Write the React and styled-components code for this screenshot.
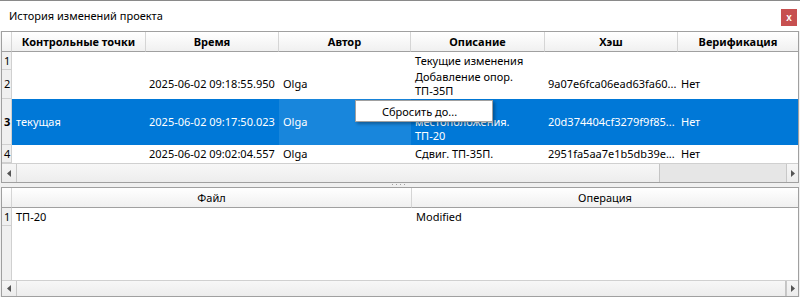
import React from 'react';
import styled, { createGlobalStyle } from 'styled-components';

const GlobalStyle = createGlobalStyle`
  html, body { margin: 0; padding: 0; background: #f0f0f0; }
  body { font-family: "Noto Sans", "Liberation Sans", sans-serif; font-size: 11px; color: #000; }
`;

// Окно целиком
const Window = styled.div`
  position: relative;
  width: 800px;
  height: 297px;
  box-sizing: border-box;
  border-top: 1px solid #8a8a8a;
  background: #f0f0f0;
  display: flex;
  flex-direction: column;
  overflow: hidden;
`;

const TitleBar = styled.div`
  height: 30px;
  background: #fff;
  display: flex;
  align-items: center;
  justify-content: space-between;
  padding: 0 3px 0 9px;
  box-sizing: border-box;
`;

const Title = styled.span`
  font-size: 11px;
  line-height: 14px;
`;

const CloseButton = styled.div`
  width: 16px;
  height: 17px;
  background: #c75050;
  color: #fff;
  font-family: "Liberation Sans", sans-serif;
  font-weight: bold;
  font-size: 10px;
  display: flex;
  align-items: center;
  justify-content: center;
  margin-top: 2px;
`;

const Frame = styled.div`
  margin: 0 1px;
  border: 1px solid #a0a0a0;
  background: #fff;
  display: flex;
  flex-direction: column;
  height: ${(p) => p.$height}px;
  box-sizing: border-box;
`;

const Row = styled.div`
  display: grid;
  grid-template-columns: ${(p) => p.$cols};
  height: ${(p) => p.$height}px;
  box-sizing: border-box;
`;

const HeaderCell = styled.div`
  background: linear-gradient(#ffffff, #f0f0f0);
  border-right: 1px solid #d5d5d5;
  border-bottom: 1px solid #a0a0a0;
  display: flex;
  align-items: center;
  justify-content: center;
  font-weight: ${(p) => (p.$bold ? 'bold' : 'normal')};
  white-space: nowrap;
  overflow: hidden;
  &:last-child { border-right: none; }
`;

const RowHeader = styled.div`
  background: #f0f0f0;
  border-right: 1px solid #d0d0d0;
  border-bottom: 1px solid #d0d0d0;
  padding-left: 2px;
  display: flex;
  align-items: center;
  font-weight: ${(p) => (p.$bold ? 'bold' : 'normal')};
`;

const Cell = styled.div`
  display: flex;
  flex-direction: column;
  justify-content: center;
  padding: 0 2px 0 ${(p) => p.$pad ?? 4}px;
  line-height: 14px;
  white-space: nowrap;
  overflow: hidden;
  background: ${(p) => (p.$hover ? '#1886dc' : p.$selected ? '#0078d7' : 'transparent')};
  color: ${(p) => (p.$selected ? '#fff' : '#000')};
`;

const Filler = styled.div`
  flex: 1;
  display: grid;
  grid-template-columns: ${(p) => p.$cols};
`;

const FillerHeader = styled.div`
  background: #f0f0f0;
  border-right: 1px solid #d0d0d0;
`;

const ScrollBar = styled.div`
  height: ${(p) => p.$height}px;
  display: flex;
  border-top: 1px solid #d0d0d0;
  background: #e6e6e6;
`;

const ArrowButton = styled.div`
  width: ${(p) => p.$width}px;
  background: linear-gradient(#f6f6f6, #ececec);
  border-right: ${(p) => (p.$side === 'left' ? '1px solid #c8c8c8' : 'none')};
  border-left: ${(p) => (p.$side === 'right' ? '1px solid #c8c8c8' : 'none')};
  display: flex;
  align-items: center;
  justify-content: center;
`;

const Thumb = styled.div`
  width: ${(p) => p.$width}px;
  background: linear-gradient(#f7f7f7, #ededed);
  border-right: 1px solid #c4c4c4;
`;

const Track = styled.div`
  flex: 1;
`;

const Splitter = styled.div`
  height: 4px;
  display: flex;
  justify-content: center;
  align-items: center;
`;

const MenuPopup = styled.div`
  position: absolute;
  left: 355px;
  top: 99px;
  width: 138px;
  height: 22px;
  box-sizing: border-box;
  background: #fff;
  border: 1px solid #a0a0a0;
  box-shadow: 2px 2px 3px rgba(0, 0, 0, 0.3);
  padding-left: 26px;
  display: flex;
  align-items: center;
`;

const TOP_COLS = '10px 134px 133px 132px 134px 133px 1fr';
const BOTTOM_COLS = '10px 400px 1fr';

const Arrow = ({ dir }) => (
  <svg width="4" height="7" viewBox="0 0 4 7">
    {dir === 'left' ? <polygon points="4,0 4,7 0,3.5" fill="#555" /> : <polygon points="0,0 0,7 4,3.5" fill="#555" />}
  </svg>
);

const Scroll = ({ thumb, height }) => (
  <ScrollBar $height={height}>
    <ArrowButton $width={14} $side="left"><Arrow dir="left" /></ArrowButton>
    <Thumb $width={thumb} />
    <Track />
    <ArrowButton $width={11} $side="right"><Arrow dir="right" /></ArrowButton>
  </ScrollBar>
);

const history = [
  { h: 18, point: '', time: '', author: '', desc: ['Текущие изменения'], hash: '', ver: '' },
  { h: 30, point: '', time: '2025-06-02 09:18:55.950', author: 'Olga', desc: ['Добавление опор.', 'ТП-35П'], hash: '9a07e6fca06ead63fa60...', ver: 'Нет' },
  { h: 46, point: 'текущая', time: '2025-06-02 09:17:50.023', author: 'Olga', desc: ['Изменение', 'местоположения.', 'ТП-20'], hash: '20d374404cf3279f9f85...', ver: 'Нет', selected: true },
  { h: 19, point: '', time: '2025-06-02 09:02:04.557', author: 'Olga', desc: ['Сдвиг. ТП-35П.'], hash: '2951fa5aa7e1b5db39e...', ver: 'Нет' },
];

const App = () => (
  <>
    <GlobalStyle />
    <Window>
      <TitleBar>
        <Title>История изменений проекта</Title>
        <CloseButton>x</CloseButton>
      </TitleBar>

      <Frame $height={152}>
        <Row $cols={TOP_COLS} $height={20}>
          <HeaderCell />
          <HeaderCell $bold>Контрольные точки</HeaderCell>
          <HeaderCell $bold>Время</HeaderCell>
          <HeaderCell $bold>Автор</HeaderCell>
          <HeaderCell $bold>Описание</HeaderCell>
          <HeaderCell $bold>Хэш</HeaderCell>
          <HeaderCell $bold>Верификация</HeaderCell>
        </Row>
        {history.map((r, i) => (
          <Row key={i} $cols={TOP_COLS} $height={r.h}>
            <RowHeader $bold={r.selected}>{i + 1}</RowHeader>
            <Cell $selected={r.selected}>{r.point}</Cell>
            <Cell $selected={r.selected} $pad={3}>{r.time}</Cell>
            <Cell $selected={r.selected} $hover={r.selected}>{r.author}</Cell>
            <Cell $selected={r.selected}>
              {r.desc.map((line, j) => <span key={j}>{line}</span>)}
            </Cell>
            <Cell $selected={r.selected} $pad={3}>{r.hash}</Cell>
            <Cell $selected={r.selected} $pad={3}>{r.ver}</Cell>
          </Row>
        ))}
        <Scroll thumb={642} height={18} />
      </Frame>

      <Splitter>
        <svg width="16" height="2" viewBox="0 0 16 2">
          {[0, 4, 8, 12].map((x) => <rect key={x} x={x} y="0" width="1" height="1" fill="#a0a0a0" />)}
        </svg>
      </Splitter>

      <Frame $height={110}>
        <Row $cols={BOTTOM_COLS} $height={20}>
          <HeaderCell />
          <HeaderCell>Файл</HeaderCell>
          <HeaderCell>Операция</HeaderCell>
        </Row>
        <Row $cols={BOTTOM_COLS} $height={18}>
          <RowHeader>1</RowHeader>
          <Cell>ТП-20</Cell>
          <Cell>Modified</Cell>
        </Row>
        <Filler $cols={BOTTOM_COLS}>
          <FillerHeader />
        </Filler>
        <Scroll thumb={770} height={15} />
      </Frame>

      <MenuPopup>Сбросить до...</MenuPopup>
    </Window>
  </>
);

export default App;
